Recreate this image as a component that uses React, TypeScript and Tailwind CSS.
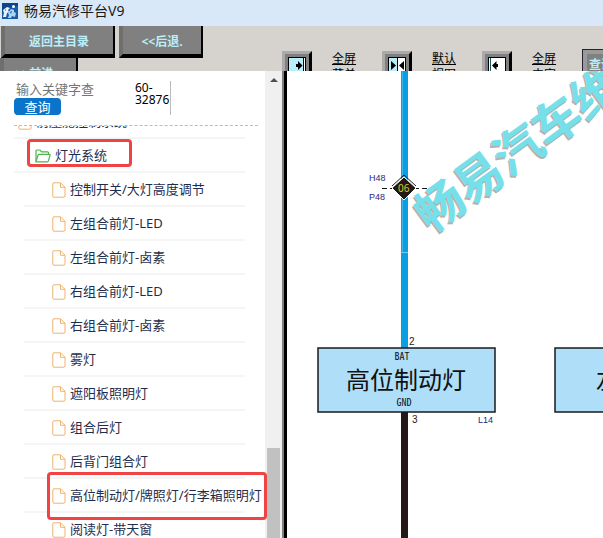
import { ReactNode } from 'react';
import clsx from 'clsx';

const TREE_ITEMS = [
  '控制开关/大灯高度调节',
  '左组合前灯-LED',
  '左组合前灯-卤素',
  '右组合前灯-LED',
  '右组合前灯-卤素',
  '雾灯',
  '遮阳板照明灯',
  '组合后灯',
  '后背门组合灯',
  '高位制动灯/牌照灯/行李箱照明灯',
  '阅读灯-带天窗',
];

const MARKED_ITEM = '高位制动灯/牌照灯/行李箱照明灯';

function AppLogo() {
  return (
    <svg width="16" height="16" viewBox="0 0 16 16" aria-hidden="true">
      <rect width="16" height="16" fill="#1a5ba8" />
      <path d="M0 0h16v3L6 5 0 9z" fill="#0d4488" />
      <path d="M1 7l4-3 3 1-2 2 1 2-2 1-1 4H1l1-4z" fill="#e8f4ff" />
      <path d="M6 10l3-4 3 1v2l2 1-1 4-3-1-1 2H6l1-3z" fill="#a8d4f6" />
      <path d="M8 9l2-1-1 3zM3 7l1-1v2z" fill="#1a5ba8" />
      <circle cx="11.500" cy="3.500" r="1.500" fill="#fff" />
    </svg>
  );
}

function FileIcon() {
  return (
    <svg width="14" height="16" viewBox="0 0 14 16" fill="none" stroke="#eeb36f" className="shrink-0" aria-hidden="true">
      <path d="M2 .8h6.5L13 5.3V14a1.2 1.2 0 0 1-1.2 1.2H2A1.2 1.2 0 0 1 .8 14V2A1.2 1.2 0 0 1 2 .8z" />
      <path d="M8.5.8v4.5H13" />
    </svg>
  );
}

function FolderIcon() {
  return (
    <svg width="16" height="14" viewBox="0 0 16 14" fill="none" stroke="#4db34d" strokeWidth="1.2" className="shrink-0" aria-hidden="true">
      <path d="M1 12.500V2q0-1 1-1h3l1.500 1.800H12.500q1 0 1 1v1.500" />
      <path d="M1 12.800L3 6.200q.3-.9 1.200-.9h10.200q1 0 .7.900l-1.700 5.700q-.3.900-1.200.900z" />
    </svg>
  );
}

interface ClassicButtonProps {
  children: ReactNode;
  className?: string;
}

function ClassicButton({ children, className }: ClassicButtonProps) {
  return (
    <button
      type="button"
      className={clsx(
        'h-8 border-r-2 border-b-4 border-l-4 border-r-black border-b-black border-l-[#6f6f6f] bg-[#808080] pt-1 text-xs font-bold whitespace-nowrap text-[#b9effa]',
        className
      )}
    >
      {children}
    </button>
  );
}

type ViewMode = 'menu' | 'split' | 'content';

function ViewIcon({ mode }: { mode: ViewMode }) {
  return (
    <svg width="18" height="18" viewBox="0 0 18 18" aria-hidden="true">
      <rect width="18" height="18" fill="#fff" />
      {mode === 'menu' && (
        <>
          <rect width="15" height="18" fill="#b9effa" />
          <path d="M15.500 0v18" stroke="#000" />
          <path d="M8 7h2V4l4.500 4.500L10 13v-3H8z" />
        </>
      )}
      {mode === 'split' && (
        <>
          <rect width="9" height="18" fill="#b9effa" />
          <path d="M9.500 0v18" stroke="#000" />
          <path d="M3 7V4l5 4.500L3 13v-3zM16 7V4l-5 4.500L16 13v-3z" />
        </>
      )}
      {mode === 'content' && (
        <>
          <path d="M2.500 0v18" stroke="#1d5a66" />
          <path d="M10 7H8.500V4L4 8.500 8.500 13v-3H10z" />
        </>
      )}
      <rect x=".5" y=".5" width="17" height="17" fill="none" stroke="#000" />
    </svg>
  );
}

function ViewLink({ mode, top, bottom }: { mode: ViewMode; top: string; bottom: string }) {
  return (
    <div className="flex w-[100px] shrink-0 items-start">
      <button
        type="button"
        aria-label={top + bottom}
        className="border-3 border-t-[#aaa] border-r-black border-b-black border-l-[#aaa] bg-[#808080] p-[3px]"
      >
        <ViewIcon mode={mode} />
      </button>
      <a href="#" className="ml-5 w-6 text-xs leading-4 text-black underline">
        {top}
        <br />
        {bottom}
      </a>
    </div>
  );
}

function Toolbar() {
  return (
    <div className="flex h-[45px] shrink-0 overflow-hidden bg-[#d6d3ce]">
      <div className="w-[282px] shrink-0">
        <div className="flex gap-1 pl-px">
          <ClassicButton className="w-[114px]">返回主目录</ClassicButton>
          <ClassicButton className="w-[84px]">&lt;&lt;后退.</ClassicButton>
        </div>
        <ClassicButton className="w-[78px] pr-2">&gt;&gt;前进.</ClassicButton>
      </div>
      <div className="flex pt-[25px]">
        <ViewLink mode="menu" top="全屏" bottom="菜单" />
        <ViewLink mode="split" top="默认" bottom="视图" />
        <ViewLink mode="content" top="全屏" bottom="内容" />
        <button
          type="button"
          className="-mt-0.5 h-8 w-16 shrink-0 border border-[#223] bg-[#808080] pl-1.5 text-left text-xs font-bold text-[#b9effa] inset-ring-4 inset-ring-[#9a9a9a]"
        >
          查询
        </button>
      </div>
    </div>
  );
}

function SearchBar() {
  return (
    <div className="flex h-[55px] shrink-0 items-start border-b border-dashed border-[#bbb] pt-[10px]">
      <form className="w-[121px]" onSubmit={(e) => e.preventDefault()}>
        <input
          type="text"
          aria-label="关键字"
          placeholder="输入关键字查"
          className="block h-[17px] w-[84px] pl-0.5 text-[13px] placeholder:text-[#757575] focus:outline-none"
        />
        <button type="submit" className="block h-[17px] w-[47px] rounded bg-[#0a74ca] text-[13px] leading-4 text-white">
          查询
        </button>
      </form>
      <div className="h-[34px] w-9 border-r border-[#bbb] pt-px text-xs leading-3 text-black">
        60-
        <br />
        32876
      </div>
    </div>
  );
}

function TreeItem({ label, marked }: { label: string; marked?: boolean }) {
  return (
    <li className="relative h-[34px] border-b-2 border-[#f5f5f5]">
      <a href="#" className="flex h-full items-center gap-1 pt-px pl-7 text-[13px] whitespace-nowrap text-[#1f2d4d]">
        <FileIcon />
        {label}
      </a>
      {marked && <span className="absolute -top-[7px] left-[23px] h-12 w-[220px] rounded-sm border-3 border-[#f04343]" />}
    </li>
  );
}

function Sidebar() {
  return (
    <aside className="flex w-[265px] shrink-0 flex-col pr-[7px] pl-[14px]">
      <SearchBar />
      {/* list is scrolled, so the previous group shows only its lower edge */}
      <nav className="-mr-[10px] min-h-0 flex-1 overflow-hidden pr-[23px]">
        <ul className="-mt-[21px]">
          <li className="h-[34px] border-b-2 border-[#f5f5f5]">
            <a href="#" className="flex h-full items-center gap-1 pt-px pl-1 text-[13px] text-[#1f2d4d]">
              <FileIcon />
              前座舱控制系统
            </a>
          </li>
          <li>
            <div className="relative h-[34px] border-b-2 border-[#f5f5f5]">
              <a href="#" className="flex h-full items-center gap-1 pt-px pl-[21px] text-[13px] text-[#1f2d4d]">
                <FolderIcon />
                灯光系统
              </a>
              <span className="absolute top-0 left-[13px] h-7 w-[105px] rounded-sm border-3 border-[#f04343]" />
            </div>
            <ul className="pl-[10px]">
              {TREE_ITEMS.map((label) => (
                <TreeItem key={label} label={label} marked={label === MARKED_ITEM} />
              ))}
            </ul>
          </li>
        </ul>
      </nav>
    </aside>
  );
}

function ScrollTrack() {
  return (
    <div className="flex w-[17px] shrink-0 flex-col items-center bg-[#f0f0f0]">
      <svg width="8" height="4" viewBox="0 0 8 4" className="mt-[7px] shrink-0" aria-hidden="true">
        <path d="M4 0l4 4H0z" fill="#505050" />
      </svg>
      <div className="grow-[366]" />
      <div className="w-[13px] grow-[90] bg-[#c1c1c1]" />
    </div>
  );
}

function WiringDiagram() {
  return (
    <svg width="320" height="467" viewBox="0 0 320 467" role="img" aria-label="高位制动灯">
      {/* supply and ground wires */}
      <path d="M117.500 0v278" stroke="#0a9fe2" strokeWidth="7" />
      <path d="M115.500 0v181" stroke="#3fb3ea" />
      <path d="M114 181.500h7" stroke="#7cc8ec" />
      <path d="M117.500 341v126" stroke="#231815" strokeWidth="7" />

      {/* connector */}
      <path d="M95 117.500h45" stroke="#111" strokeDasharray="5 3" />
      <path d="M105 115l12-11 12 11" fill="none" stroke="#231815" />
      <path d="M117 106l12 11-12 12-12-12z" fill="#231815" stroke="#fff" />
      <text x="111" y="121" fontSize="10" fill="#d4cb2e">06</text>

      <g fontFamily='"Liberation Sans", sans-serif' fontSize="9" fill="#27277c">
        <text x="82" y="110">H48</text>
        <text x="82" y="129">P48</text>
        <text x="191" y="352">L14</text>
      </g>
      <g fontFamily='"Liberation Sans", sans-serif' fontSize="10" fill="#222">
        <text x="122" y="274">2</text>
        <text x="125" y="352">3</text>
      </g>

      {/* components */}
      <g fill="#aedef8" stroke="#1a1a1a" strokeWidth="1.500">
        <rect x="31" y="277" width="177" height="64" />
        <rect x="268" y="277" width="177" height="64" />
      </g>
      <g fontFamily='"Noto Sans Mono CJK SC", "Noto Sans CJK SC", sans-serif' fontSize="10" fill="#111" textAnchor="middle">
        <text x="115" y="289">BAT</text>
        <text x="117" y="335">GND</text>
      </g>
      <g fontSize="24" fill="#111">
        <text x="59" y="318">高位制动灯</text>
        <text x="309" y="318">左</text>
      </g>

      {/* watermark */}
      <g transform="translate(144 163) rotate(-36)" fontSize="48" fontWeight="700">
        <text x="-2" y="1" fill="#b5b0ac">畅易汽车维修</text>
        <text x="0" y="0" fill="#75e0ea">畅易汽车维修</text>
      </g>
    </svg>
  );
}

export default function App() {
  return (
    <div className="flex h-screen flex-col overflow-hidden bg-white font-['Noto_Sans','Noto_Sans_CJK_SC',sans-serif]">
      <header className="flex h-[26px] shrink-0 items-start gap-1.5 bg-[#d9e8f8] pt-[3px] pl-0.5">
        <AppLogo />
        <h1 className="text-sm leading-4 text-[#1a1a1a]">畅易汽修平台V9</h1>
      </header>
      <Toolbar />
      <div className="flex min-h-0 flex-1">
        <Sidebar />
        <ScrollTrack />
        <main className="min-w-0 flex-1 overflow-hidden border-l-2 border-[#808080]">
          <div className="h-full border-l-3 border-black">
            <WiringDiagram />
          </div>
        </main>
      </div>
    </div>
  );
}
